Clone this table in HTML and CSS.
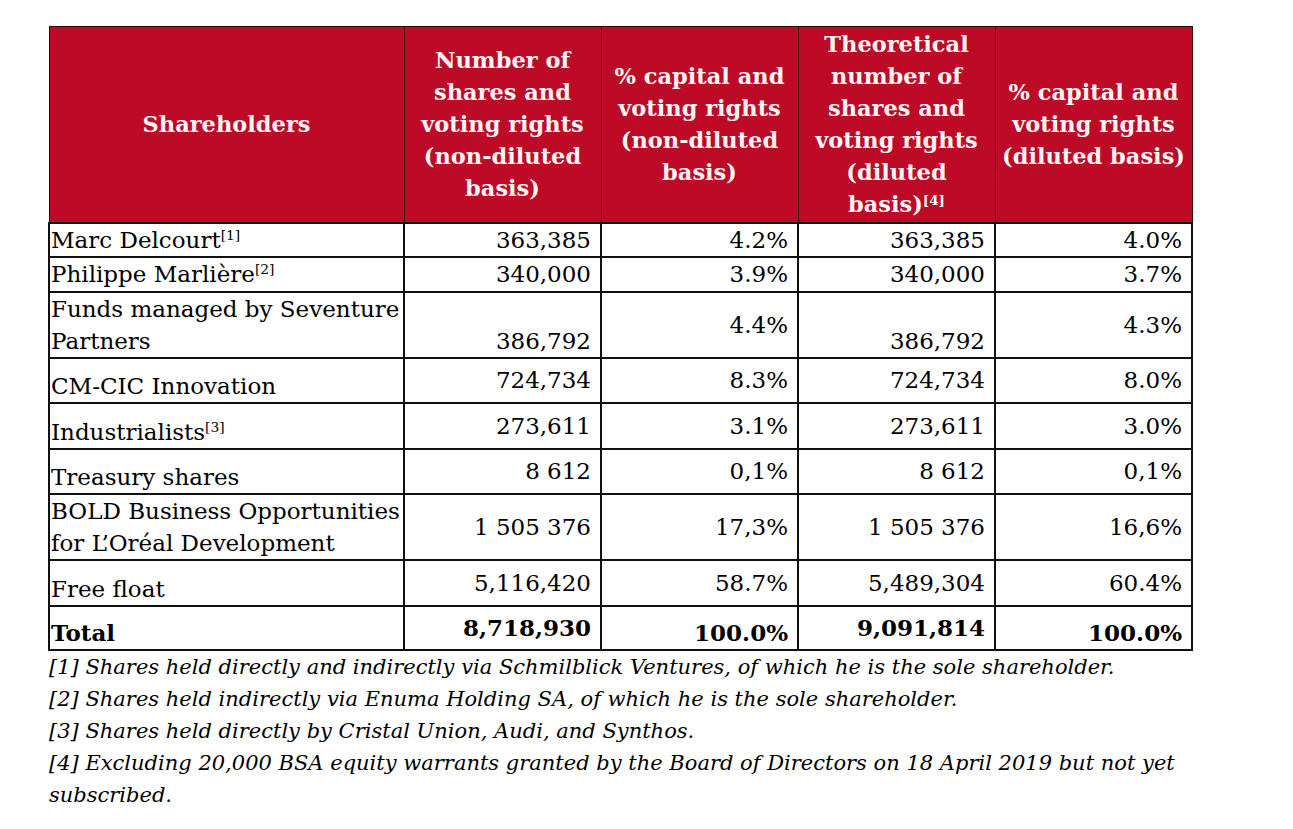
FILE: index.html
```html
<!DOCTYPE html>
<html>
<head>
<meta charset="utf-8">
<link rel="stylesheet" href="styles.css">
</head>
<body>
<div class="page">
<table class="cap">
<colgroup><col class="c1"><col class="cn"><col class="cn"><col class="cn"><col class="cn"></colgroup>
<thead>
<tr class="hrow">
<th>Shareholders</th>
<th>Number of shares and voting rights (non-diluted basis)</th>
<th>% capital and voting rights (non-diluted basis)</th>
<th>Theoretical number of shares and voting rights (diluted <span class="nw">basis)<sup>[4]</sup></span></th>
<th>% capital and voting rights (diluted basis)</th>
</tr>
</thead>
<tbody>
<tr class="r1"><td class="name">Marc Delcourt<sup>[1]</sup></td><td>363,385</td><td>4.2%</td><td>363,385</td><td>4.0%</td></tr>
<tr class="r2"><td class="name">Philippe Marlière<sup>[2]</sup></td><td>340,000</td><td>3.9%</td><td>340,000</td><td>3.7%</td></tr>
<tr class="r3"><td class="name">Funds managed by Seventure Partners</td><td class="bot">386,792</td><td class="mid">4.4%</td><td class="bot">386,792</td><td class="mid">4.3%</td></tr>
<tr class="r4"><td class="name low">CM-CIC Innovation</td><td class="mid">724,734</td><td class="mid">8.3%</td><td class="mid">724,734</td><td class="mid">8.0%</td></tr>
<tr class="r5"><td class="name low">Industrialists<sup>[3]</sup></td><td class="mid">273,611</td><td class="mid">3.1%</td><td class="mid">273,611</td><td class="mid">3.0%</td></tr>
<tr class="r6"><td class="name low">Treasury shares</td><td class="mid">8 612</td><td class="mid">0,1%</td><td class="mid">8 612</td><td class="mid">0,1%</td></tr>
<tr class="r7"><td class="name">BOLD Business Opportunities for L’Oréal Development</td><td class="mid">1 505 376</td><td class="mid">17,3%</td><td class="mid">1 505 376</td><td class="mid">16,6%</td></tr>
<tr class="r8"><td class="name low">Free float</td><td class="mid">5,116,420</td><td class="mid">58.7%</td><td class="mid">5,489,304</td><td class="mid">60.4%</td></tr>
<tr class="r9 total"><td class="name low">Total</td><td class="mid">8,718,930</td><td class="bot">100.0%</td><td class="mid">9,091,814</td><td class="bot">100.0%</td></tr>
</tbody>
</table>
<div class="notes">
<p>[1] Shares held directly and indirectly via Schmilblick Ventures, of which he is the sole shareholder.</p>
<p>[2] Shares held indirectly via Enuma Holding SA, of which he is the sole shareholder.</p>
<p>[3] Shares held directly by Cristal Union, Audi, and Synthos.</p>
<p>[4] Excluding 20,000 BSA equity warrants granted by the Board of Directors on 18 April 2019 but not yet subscribed.</p>
</div>
</div>
</body>
</html>
```
FILE: styles.css
```css
html, body {
  margin: 0;
  padding: 0;
  background: #ffffff;
}
.page {
  padding: 26px 0 0 48px;
  font-family: "DejaVu Serif", "Liberation Serif", serif;
  color: #000;
}
.cap {
  border-collapse: collapse;
  table-layout: fixed;
  width: 1144px;
  font-size: 23px;
  line-height: 32px;
}
.c1 { width: 355px; }
.cn { width: 197px; }
.cap th {
  background: #bd0a26;
  color: #fff4f4;
  font-weight: bold;
  font-size: 22.5px;
  text-align: center;
  vertical-align: middle;
  padding: 0 3px;
  border: 1px solid #3a0008;
  border-bottom: 2px solid #111;
}
.nw { white-space: nowrap; }
.hrow { height: 196px; }
.cap td {
  border: 2px solid #111;
  text-align: right;
  vertical-align: top;
  padding: 0 9px 0 4px;
  white-space: nowrap;
}
.cap td.name {
  text-align: left;
  padding: 0 0 0 1px;
  white-space: normal;
}
.cap td.mid { vertical-align: middle; }
.cap td.bot { vertical-align: bottom; }
.cap td.low { vertical-align: bottom; }
.r1 { height: 34px; }
.r2 { height: 35px; }
.r3 { height: 66px; }
.r4 { height: 45px; }
.r5 { height: 46px; }
.r6 { height: 45px; }
.r7 { height: 66px; }
.r8 { height: 46px; }
.r9 { height: 44px; }
.total td { font-weight: bold; }
sup {
  font-size: 0.6em;
  line-height: 0;
  vertical-align: 0.55em;
}
.notes {
  font-style: italic;
  font-size: 21px;
  line-height: 32px;
}
.notes p {
  margin: 0;
  padding-left: 1px;
  width: 1210px;
}
```
